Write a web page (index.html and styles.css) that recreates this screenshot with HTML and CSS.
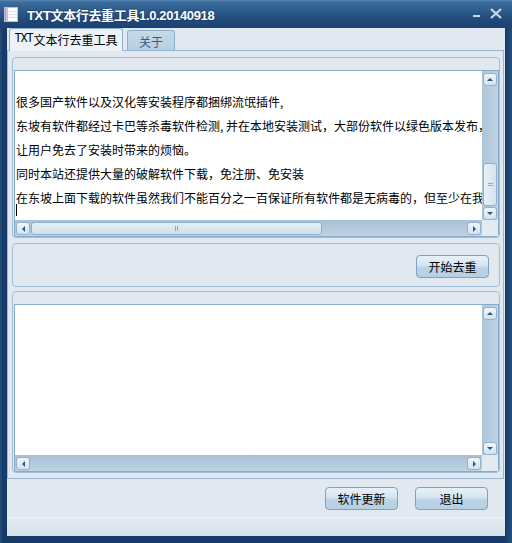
FILE: index.html
```html
<!DOCTYPE html>
<html lang="zh-CN">
<head>
<meta charset="utf-8">
<title>TXT文本行去重工具</title>
<link rel="stylesheet" href="styles.css">
</head>
<body>
<div class="window">
  <div class="titlebar">
    <svg class="app-icon" width="14" height="15" viewBox="0 0 14 15">
      <rect x="0.5" y="0.5" width="13" height="14" fill="#ffffff" stroke="#b9c2cc"/>
      <rect x="1" y="1" width="3" height="13" fill="#d9b8e6"/>
      <rect x="1" y="1" width="1" height="13" fill="#c090d6"/>
      <line x1="5" y1="4.5" x2="13" y2="4.5" stroke="#d6dde6"/>
      <line x1="5" y1="7.5" x2="13" y2="7.5" stroke="#d6dde6"/>
      <line x1="5" y1="10.5" x2="13" y2="10.5" stroke="#d6dde6"/>
    </svg>
    <span class="title">TXT文本行去重工具1.0.20140918</span>
    <svg class="caption" width="30" height="12" viewBox="0 0 30 12">
      <rect x="1" y="7" width="7" height="2" fill="#c6d9ec"/>
      <path d="M19 1 L29 10 M29 1 L19 10" stroke="#c6d9ec" stroke-width="2.2" fill="none"/>
    </svg>
  </div>
  <div class="frame">
    <div class="client">
      <div class="tabs">
        <div class="tab active"><span class="mono">TXT</span>文本行去重工具</div>
        <div class="tab">关于</div>
      </div>
      <div class="panel">
        <div class="group g1">
          <div class="editor">
            <div class="edit-body">
              <div class="text">
                <div class="line">很多国产软件以及汉化等安装程序都捆绑流氓插件,</div>
                <div class="line">东坡有软件都经过卡巴等杀毒软件检测, 并在本地安装测试，大部份软件以绿色版本发布，</div>
                <div class="line">让用户免去了安装时带来的烦恼。</div>
                <div class="line">同时本站还提供大量的破解软件下载，免注册、免安装</div>
                <div class="line last">在东坡上面下载的软件虽然我们不能百分之一百保证所有软件都是无病毒的，但至少在我</div>
                <div class="caret"></div>
              </div>
              <div class="vscroll">
                <div class="sbtn up"><i class="arr-up"></i></div>
                <div class="spacer"></div>
                <div class="vthumb"><i class="grip-h"></i></div>
                <div class="sbtn down"><i class="arr-down"></i></div>
              </div>
            </div>
            <div class="hrow">
              <div class="hscroll">
                <div class="sbtn"><i class="arr-left"></i></div>
                <div class="hthumb"><i class="grip-v"></i></div>
                <div class="spacer"></div>
                <div class="sbtn"><i class="arr-right"></i></div>
              </div>
              <div class="corner"></div>
            </div>
          </div>
        </div>
        <div class="group g2">
          <button class="btn">开始去重</button>
        </div>
        <div class="group g3">
          <div class="editor">
            <div class="edit-body">
              <div class="text"></div>
              <div class="vscroll">
                <div class="sbtn up"><i class="arr-up"></i></div>
                <div class="spacer"></div>
                <div class="sbtn down"><i class="arr-down"></i></div>
              </div>
            </div>
            <div class="hrow">
              <div class="hscroll">
                <div class="sbtn"><i class="arr-left"></i></div>
                <div class="spacer"></div>
                <div class="sbtn"><i class="arr-right"></i></div>
              </div>
              <div class="corner"></div>
            </div>
          </div>
        </div>
      </div>
      <div class="bottom-bar">
        <button class="btn">软件更新</button>
        <button class="btn">退出</button>
      </div>
      <div class="status"></div>
    </div>
  </div>
</div>
</body>
</html>
```

FILE: styles.css
```css
* { box-sizing: border-box; margin: 0; padding: 0; }
html, body { width: 512px; height: 543px; overflow: hidden; }
body {
  font-family: "Noto Sans CJK SC", "Liberation Sans", sans-serif;
  font-size: 12px;
  color: #000;
  background: #1b3d6a;
}
.window { width: 512px; height: 543px; display: flex; flex-direction: column; }

.titlebar {
  height: 28px;
  flex: none;
  display: flex;
  align-items: center;
  padding-left: 4px;
  background: linear-gradient(#5a87b4 0px, #3d6d9d 2px, #2d5b8b 11px, #214a7a 20px, #1b4170 28px);
}
.app-icon { flex: none; margin-right: 9px; margin-top: 1px; }
.title {
  color: #ffffff;
  font-family: "Liberation Sans", "Noto Sans CJK SC", sans-serif;
  font-weight: bold;
  font-size: 13px;
  letter-spacing: -0.35px;
  text-shadow: 0 0 2px #0c2a50;
}
.caption { margin-left: auto; margin-right: 10px; flex: none; }

.frame {
  height: 515px;
  flex: none;
  padding: 0 7px 7px 7px;
  background: linear-gradient(to right, #24517f 0, #173a66 3px, #173a66 505px, #24517f 512px);
}
.client {
  height: 508px;
  background: #e1e8f0;
  display: flex;
  flex-direction: column;
}

.tabs {
  height: 22px;
  flex: none;
  display: flex;
  align-items: flex-end;
  padding-left: 2px;
}
.tab {
  display: flex;
  align-items: center;
  justify-content: center;
  border: 1px solid #8eafcc;
  border-bottom: none;
  border-radius: 3px 3px 0 0;
}
.tab.active {
  width: 114px;
  height: 23px;
  margin-bottom: -1px;
  background: #edf2f7;
  position: relative;
  z-index: 1;
  padding-bottom: 2px;
}
.tab:not(.active) {
  width: 48px;
  height: 20px;
  margin-left: 4px;
  background: linear-gradient(#c6dae8, #b6cfe1);
  color: #3d5d80;
  padding-top: 1px;
}
.mono { font-family: "Liberation Mono", monospace; font-size: 12px; letter-spacing: -1.2px; margin-right: 1px; }

.panel {
  height: 429px;
  flex: none;
  margin-right: 1px;
  border: 1px solid #98b7d1;
  padding: 6px 3px 5px 4px;
  display: flex;
  flex-direction: column;
}
.group {
  flex: none;
  border: 1px solid #a2bfd7;
  border-radius: 4px;
  display: flex;
  flex-direction: column;
  overflow: hidden;
}
.g1 { height: 181px; padding: 12px 0 0 1px; }
.g2 { height: 44px; margin-top: 5px; padding: 11px 10px 0 0; flex-direction: row; justify-content: flex-end; align-items: flex-start; }
.g3 { height: 182px; margin-top: 4px; padding: 12px 0 0 1px; }

.editor {
  flex: 1;
  min-height: 0;
  border: 1px solid #86abcd;
  background: #ffffff;
  display: flex;
  flex-direction: column;
  overflow: hidden;
}
.edit-body { flex: 1; display: flex; min-height: 0; }
.text {
  flex: 1;
  min-width: 0;
  overflow: hidden;
  padding: 25px 0 0 1px;
}
.line {
  height: 12px;
  line-height: 12px;
  margin-bottom: 12px;
  white-space: nowrap;
}
.line.last { margin-bottom: 0; }
.caret { width: 1px; height: 12px; background: #000; }

.vscroll {
  width: 16px;
  flex: none;
  display: flex;
  flex-direction: column;
  padding: 2px 1px 0 1px;
  background: linear-gradient(to right, #aec5da, #bed3e3);
}
.spacer { flex: 1; }
.sbtn {
  width: 14px;
  height: 13px;
  flex: none;
  border: 1px solid #92b3cf;
  border-radius: 3px;
  background: linear-gradient(#f0f6fa, #d3e2ee);
  display: flex;
  align-items: center;
  justify-content: center;
}
.vthumb {
  height: 43px;
  flex: none;
  margin-bottom: 1px;
  border: 1px solid #90b1cd;
  border-radius: 3px;
  background: linear-gradient(to right, #e9f1f7, #d4e3ee);
  display: flex;
  align-items: center;
  justify-content: center;
}
.grip-h { width: 5px; height: 3px; border-top: 1px solid #8ea9c3; border-bottom: 1px solid #8ea9c3; }
.grip-v { width: 3px; height: 5px; border-left: 1px solid #8ea9c3; border-right: 1px solid #8ea9c3; }

.hrow { height: 16px; flex: none; display: flex; }
.hscroll {
  flex: 1;
  display: flex;
  padding: 2px 1px 1px 1px;
  background: linear-gradient(#a8c0d6, #bdd3e3);
}
.hscroll .sbtn { width: 14px; height: 13px; }
.hthumb {
  width: 291px;
  flex: none;
  margin-left: 1px;
  border: 1px solid #90b1cd;
  border-radius: 3px;
  background: linear-gradient(#e6eff6, #cfdfeb);
  display: flex;
  align-items: center;
  justify-content: center;
}
.corner { width: 16px; flex: none; background: #e3eaf1; }

.arr-up, .arr-down, .arr-left, .arr-right { display: block; width: 0; height: 0; }
.arr-up { border-left: 3px solid transparent; border-right: 3px solid transparent; border-bottom: 3px solid #2f5785; }
.arr-down { border-left: 3px solid transparent; border-right: 3px solid transparent; border-top: 3px solid #2f5785; }
.arr-left { border-top: 3px solid transparent; border-bottom: 3px solid transparent; border-right: 3px solid #2f5785; }
.arr-right { border-top: 3px solid transparent; border-bottom: 3px solid transparent; border-left: 3px solid #2f5785; }

.btn {
  width: 73px;
  height: 23px;
  border: 1px solid #7fa2c2;
  border-radius: 4px;
  background: linear-gradient(#e8f1f8 0, #d5e5f1 45%, #bcd4e6 55%, #b6cfe2 100%);
  font-family: "Noto Sans CJK SC", sans-serif;
  font-size: 12px;
  color: #000;
  display: flex;
  align-items: center;
  justify-content: center;
}

.bottom-bar {
  height: 38px;
  flex: none;
  display: flex;
  justify-content: flex-end;
  align-items: flex-start;
  gap: 17px;
  padding: 8px 17px 0 0;
}
.status {
  height: 19px;
  flex: none;
  border-top: 1px solid #f0f4f8;
  background: linear-gradient(#e4ebf2, #d6e1ea);
}
```
